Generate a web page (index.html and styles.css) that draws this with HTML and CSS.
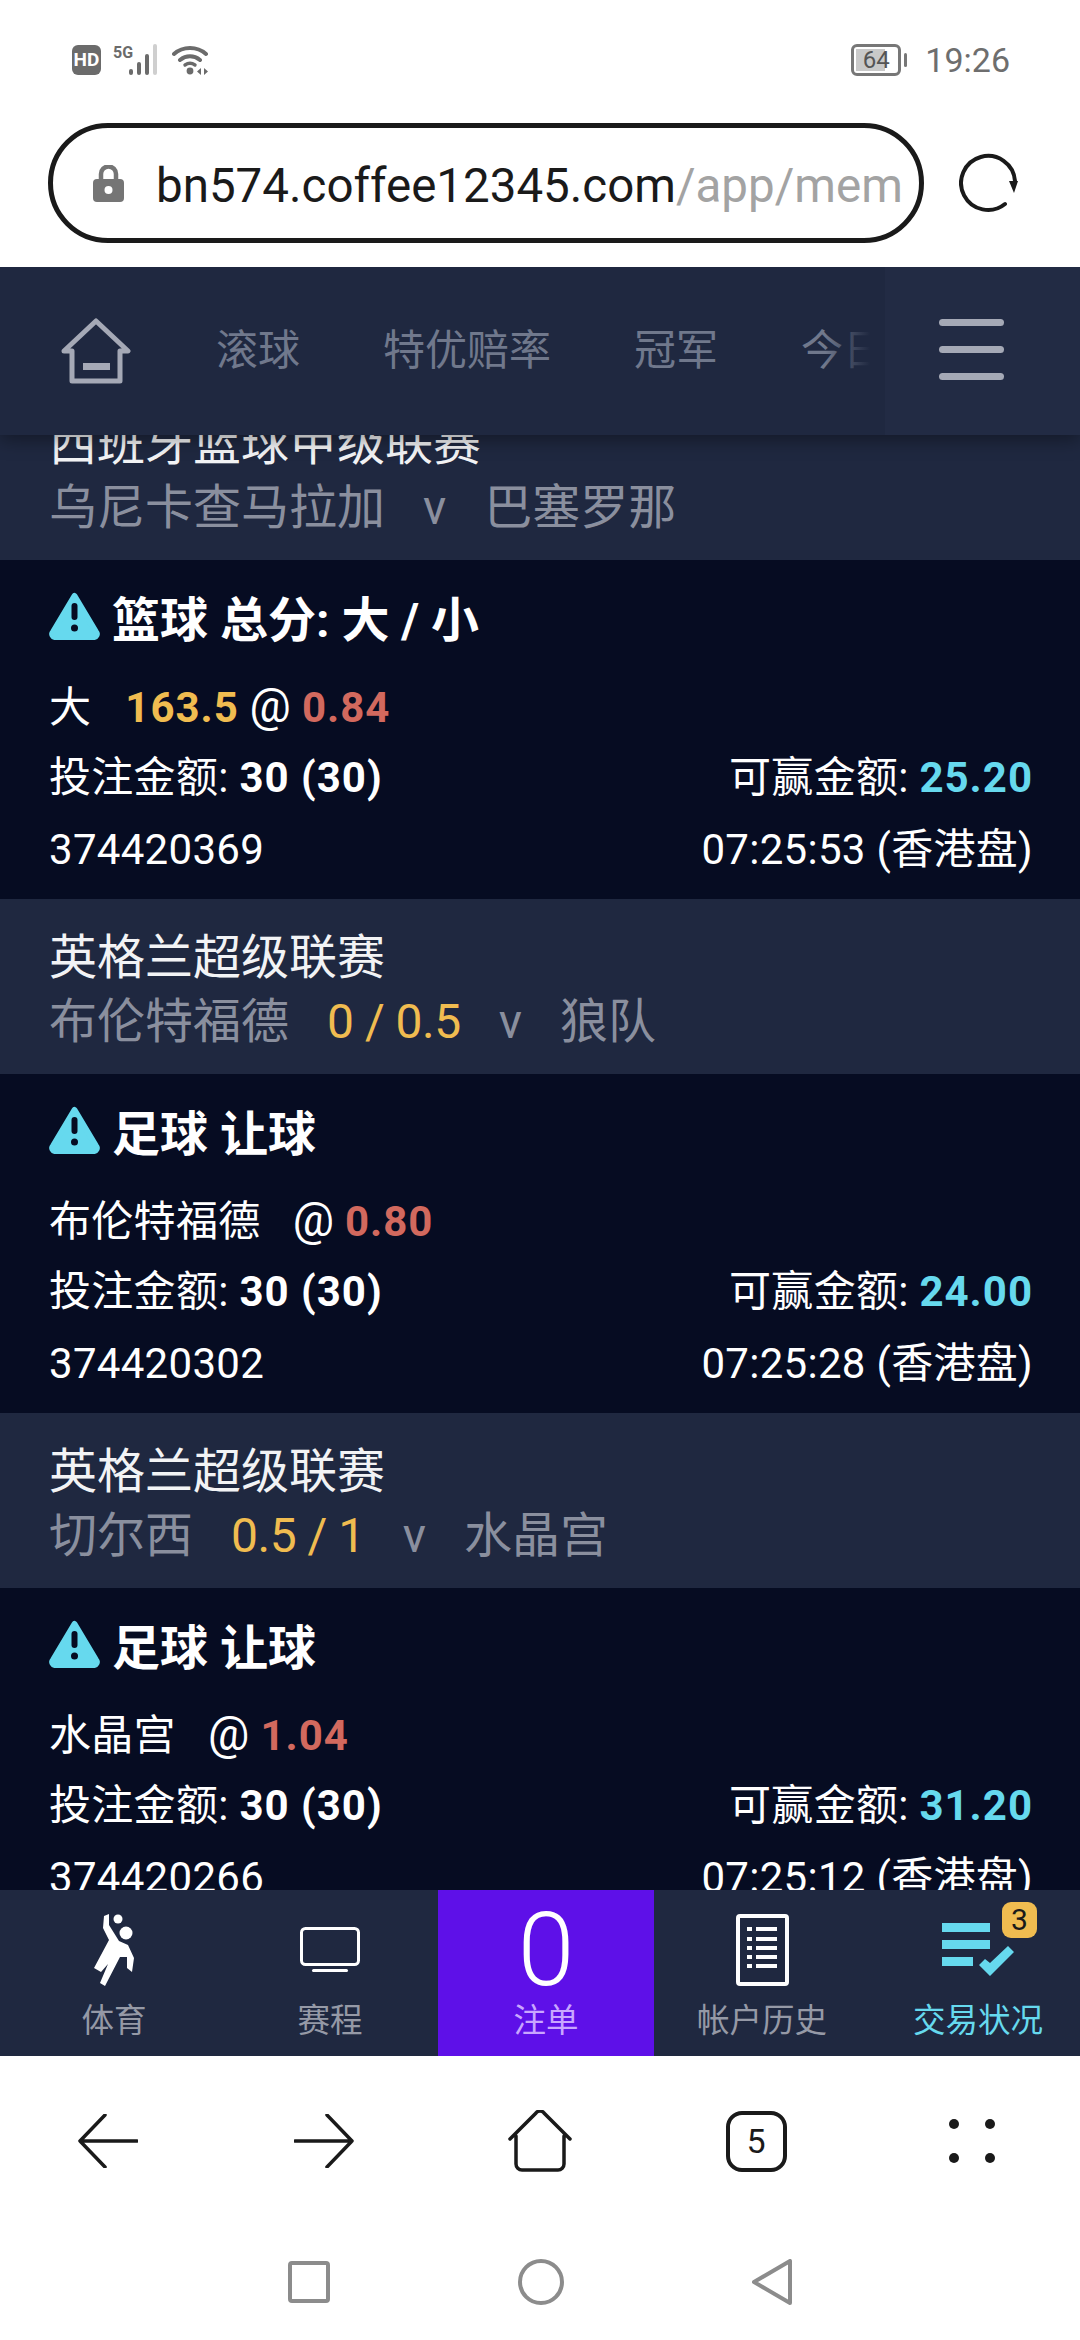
FILE: index.html
```html
<!DOCTYPE html>
<html lang="zh-CN">
<head>
  <meta charset="UTF-8" />
  <title>交易状况</title>
  <link rel="stylesheet" href="styles.css">
</head>
<body>
  <div class="phone">
    <div class="status-bar">
      <div class="status-left">
        <svg class="ic-hd" width="29" height="30" viewBox="0 0 29 30"><rect width="29" height="30" rx="6" fill="#6b6b6b"/><text x="14.5" y="21" class="hd-text">HD</text></svg>
        <svg class="ic-signal" width="50" height="32" viewBox="0 0 50 32"><text x="0" y="14" class="fiveg-text">5G</text><rect x="16" y="25" width="4" height="6" rx="2" fill="#6b6b6b"/><rect x="24" y="18" width="4" height="13" rx="2" fill="#6b6b6b"/><rect x="32" y="10" width="4" height="21" rx="2" fill="#6b6b6b"/><rect x="40" y="0" width="4" height="31" rx="2" fill="#cfcfcf"/></svg>
        <svg class="ic-wifi" width="38" height="32" viewBox="0 0 38 32"><path d="M2 10C11 2 25 2 34 10M8 16C14 11 22 11 28 16" fill="none" stroke="#6b6b6b" stroke-width="4" stroke-linecap="round"/><path d="M13 21c3-2 7-2 10 0" fill="none" stroke="#6b6b6b" stroke-width="3.4" stroke-linecap="round"/><circle cx="18" cy="27" r="3.4" fill="#6b6b6b"/><path d="M29 24v7l-4-3.500zM32 24v7l4-3.500z" fill="#6b6b6b"/></svg>
      </div>
      <div class="status-right">
        <div class="battery"><div class="battery-body"><span class="battery-fill"></span><span class="battery-num">64</span></div><span class="battery-cap"></span></div>
        <span class="clock">19:26</span>
      </div>
    </div>

    <div class="address-row">
      <div class="address-pill">
        <svg width="31" height="37" viewBox="0 0 31 37"><path d="M8 16V9a7.500 7.500 0 0 1 15 0v7" fill="none" stroke="#757575" stroke-width="4.500"/><rect y="14" width="31" height="23" rx="4" fill="#757575"/><circle cx="15.500" cy="25" r="4" fill="#fff"/></svg>
        <div class="url"><span class="url-host">bn574.coffee12345.com</span><span class="url-path">/app/mem</span></div>
      </div>
      <svg class="reload" width="60" height="60" viewBox="0 0 60 60"><path d="M46 51A27 27 0 1 1 56 28" fill="none" stroke="#1a1a1a" stroke-width="4" stroke-linecap="round"/><path d="M50 28H59L55 40Z" fill="#1a1a1a"/></svg>
    </div>

    <div class="top-nav">
      <svg class="nav-home" width="70" height="66" viewBox="0 0 70 66"><path d="M35 3 67 33H59V63H11V33H3Z" fill="none" stroke="#a5a9b6" stroke-width="5" stroke-linejoin="round"/><rect x="22" y="45" width="27" height="7" fill="#a5a9b6"/></svg>
      <div class="nav-scroll">
        <span class="nav-item">滚球</span>
        <span class="nav-item">特优赔率</span>
        <span class="nav-item">冠军</span>
        <span class="nav-item">今日</span>
      </div>
      <div class="nav-menu">
        <span class="menu-line"></span>
        <span class="menu-line"></span>
        <span class="menu-line"></span>
      </div>
    </div>

    <div class="bet-list">
      <div class="bet-list-inner">
        <div class="league">
          <div class="league-name">西班牙篮球甲级联赛</div>
          <div class="league-match"><span>乌尼卡查马拉加</span><span>v</span><span>巴塞罗那</span></div>
        </div>
        <div class="bet">
          <div class="bet-title">
            <svg class="warn" width="51" height="48" viewBox="0 0 51 48"><path d="M25.500 4 47 40a3 3 0 0 1-2.600 5H6.600A3 3 0 0 1 4 40Z" fill="#66d9ee" stroke="#66d9ee" stroke-width="6" stroke-linejoin="round"/><rect x="22.500" y="11" width="6" height="17" rx="3" fill="#060c22"/><circle cx="25.500" cy="36" r="3.500" fill="#060c22"/></svg>
            <span>篮球 总分: 大 / 小</span>
          </div>
          <div class="bet-line"><span>大<b class="yellow pick">163.5</b> <span class="at">@</span> <b class="red">0.84</b></span></div>
          <div class="bet-line"><span>投注金额: <b>30 (30)</b></span><span>可赢金额: <b class="cyan">25.20</b></span></div>
          <div class="bet-line"><span>374420369</span><span>07:25:53 (香港盘)</span></div>
        </div>
        <div class="league">
          <div class="league-name">英格兰超级联赛</div>
          <div class="league-match"><span>布伦特福德</span><span class="yellow line-value">0 / 0.5</span><span>v</span><span>狼队</span></div>
        </div>
        <div class="bet">
          <div class="bet-title">
            <svg class="warn" width="51" height="48" viewBox="0 0 51 48"><path d="M25.500 4 47 40a3 3 0 0 1-2.600 5H6.600A3 3 0 0 1 4 40Z" fill="#66d9ee" stroke="#66d9ee" stroke-width="6" stroke-linejoin="round"/><rect x="22.500" y="11" width="6" height="17" rx="3" fill="#060c22"/><circle cx="25.500" cy="36" r="3.500" fill="#060c22"/></svg>
            <span>足球 让球</span>
          </div>
          <div class="bet-line"><span>布伦特福德&nbsp;&nbsp; <span class="at">@</span> <b class="red">0.80</b></span></div>
          <div class="bet-line"><span>投注金额: <b>30 (30)</b></span><span>可赢金额: <b class="cyan">24.00</b></span></div>
          <div class="bet-line"><span>374420302</span><span>07:25:28 (香港盘)</span></div>
        </div>
        <div class="league">
          <div class="league-name">英格兰超级联赛</div>
          <div class="league-match"><span>切尔西</span><span class="yellow line-value">0.5 / 1</span><span>v</span><span>水晶宫</span></div>
        </div>
        <div class="bet">
          <div class="bet-title">
            <svg class="warn" width="51" height="48" viewBox="0 0 51 48"><path d="M25.500 4 47 40a3 3 0 0 1-2.600 5H6.600A3 3 0 0 1 4 40Z" fill="#66d9ee" stroke="#66d9ee" stroke-width="6" stroke-linejoin="round"/><rect x="22.500" y="11" width="6" height="17" rx="3" fill="#060c22"/><circle cx="25.500" cy="36" r="3.500" fill="#060c22"/></svg>
            <span>足球 让球</span>
          </div>
          <div class="bet-line"><span>水晶宫&nbsp;&nbsp; <span class="at">@</span> <b class="red">1.04</b></span></div>
          <div class="bet-line"><span>投注金额: <b>30 (30)</b></span><span>可赢金额: <b class="cyan">31.20</b></span></div>
          <div class="bet-line"><span>374420266</span><span>07:25:12 (香港盘)</span></div>
        </div>
      </div>
    </div>

    <div class="tabbar">
      <div class="tab">
        <div class="tab-icon"><svg width="50" height="80" viewBox="0 0 50 80"><circle cx="29" cy="9" r="4.500" fill="#fff"/><circle cx="37" cy="23" r="6.500" fill="#fff"/><path d="M15 6 20 4 20 15 30 31 39 35 45 48 43 62 38 58 38 47 31 47 16 76 11 73 19 54 12 62 5 58 20 30 14 18Z" fill="#fff"/></svg></div>
        <div class="tab-label">体育</div>
      </div>
      <div class="tab">
        <div class="tab-icon"><svg width="60" height="46" viewBox="0 0 60 46"><rect x="1.500" y="1.500" width="57" height="36" rx="4" fill="none" stroke="#fff" stroke-width="3"/><rect x="12" y="42" width="36" height="3" rx="1.500" fill="#fff"/></svg></div>
        <div class="tab-label">赛程</div>
      </div>
      <div class="tab tab-slip">
        <div class="tab-icon slip-count">0</div>
        <div class="tab-label">注单</div>
      </div>
      <div class="tab">
        <div class="tab-icon"><svg width="53" height="72" viewBox="0 0 53 72"><rect x="2" y="2" width="49" height="68" rx="2" fill="none" stroke="#fff" stroke-width="4"/><path d="M11 15h5M20 15h21M11 25h5M20 25h21M11 34h5M20 34h21M11 43h5M20 43h21M11 52h5M20 52h21" stroke="#fff" stroke-width="4"/></svg></div>
        <div class="tab-label">帐户历史</div>
      </div>
      <div class="tab tab-active">
        <div class="tab-icon"><svg width="72" height="54" viewBox="0 0 72 54"><path d="M0 0H48V9H0ZM0 17H48V26H0ZM0 34H31V43H0Z" fill="#66d9ee"/><path d="M37 42 48 53 72 29 66 23 48 40 43 36Z" fill="#66d9ee"/></svg></div>
        <div class="tab-label">交易状况</div>
        <span class="tab-badge">3</span>
      </div>
    </div>

    <div class="browser-bar">
      <div class="browser-tools">
        <svg width="60" height="54" viewBox="0 0 60 54"><path d="M27 1 2 27 27 53M2 27H59" fill="none" stroke="#1a1a1a" stroke-width="3.500" stroke-linecap="round" stroke-linejoin="round"/></svg>
        <svg width="60" height="54" viewBox="0 0 60 54"><path d="M33 1 58 27 33 53M58 27H1" fill="none" stroke="#1a1a1a" stroke-width="3.500" stroke-linecap="round" stroke-linejoin="round"/></svg>
        <svg width="64" height="62" viewBox="0 0 64 62"><path d="M2 29 28 3a5 5 0 0 1 8 0L62 29M8 26V54a6 6 0 0 0 6 6H50a6 6 0 0 0 6-6V26" fill="none" stroke="#1a1a1a" stroke-width="3.500" stroke-linecap="round"/></svg>
        <div class="tab-count">5</div>
        <div class="dots"><i></i><i></i><i></i><i></i></div>
      </div>
      <div class="system-nav">
        <svg width="42" height="42" viewBox="0 0 42 42"><rect x="2" y="2" width="38" height="38" rx="2" fill="none" stroke="#8c8c8c" stroke-width="4"/></svg>
        <svg width="46" height="46" viewBox="0 0 46 46"><circle cx="23" cy="23" r="21" fill="none" stroke="#8c8c8c" stroke-width="4"/></svg>
        <svg width="40" height="46" viewBox="0 0 40 46"><path d="M38 2V44L2 23Z" fill="none" stroke="#8c8c8c" stroke-width="4" stroke-linejoin="round"/></svg>
      </div>
    </div>
  </div>
</body>
</html>
```

FILE: styles.css
```css
:root {
  --panel: #1f2840;
  --card: #060c22;
  --muted: #8a8f9e;
  --yellow: #f0bc50;
  --red: #d2695e;
  --cyan: #66d9ee;
  --purple: #5e10e8;
}

* {
  box-sizing: border-box;
}

body {
  margin: 0;
  background: #fff;
  font-family: Roboto, "Noto Sans CJK SC", sans-serif;
}

.phone {
  width: 1080px;
  height: 2340px;
  display: flex;
  flex-direction: column;
  overflow: hidden;
}

/* status bar */
.status-bar {
  height: 123px;
  flex: none;
  padding: 0 70px 4px 72px;
  display: flex;
  align-items: center;
  justify-content: space-between;
}

.status-left {
  display: flex;
  align-items: center;
}

.ic-hd {
  margin-right: 12px;
}

.ic-signal {
  margin-right: 9px;
}

.hd-text {
  font-size: 19px;
  font-weight: 700;
  fill: #fff;
  text-anchor: middle;
}

.fiveg-text {
  font-size: 16px;
  font-weight: 700;
  fill: #6b6b6b;
}

.status-right {
  display: flex;
  align-items: center;
  gap: 18px;
}

.battery {
  display: flex;
  align-items: center;
  gap: 3px;
}

.battery-body {
  position: relative;
  width: 50px;
  height: 32px;
  border: 3px solid #777;
  border-radius: 6px;
}

.battery-fill {
  position: absolute;
  left: 2px;
  top: 2px;
  bottom: 2px;
  width: 29px;
  background: #c9c9c9;
}

.battery-num {
  position: absolute;
  left: 0;
  right: 0;
  top: 0;
  line-height: 26px;
  text-align: center;
  font-size: 24px;
  color: #555;
}

.battery-cap {
  width: 3px;
  height: 14px;
  border-radius: 2px;
  background: #777;
}

.clock {
  font-size: 34px;
  color: #6e6e6e;
}

/* address bar */
.address-row {
  position: relative;
  z-index: 3;
  height: 144px;
  flex: none;
  padding: 0 61px 24px 48px;
  display: flex;
  align-items: center;
  justify-content: space-between;
  background: #fff;
}

.address-pill {
  width: 876px;
  height: 120px;
  border: 5px solid #1a1a1a;
  border-radius: 60px;
  padding: 0 18px 0 40px;
  display: flex;
  align-items: center;
  gap: 32px;
}

.address-pill svg {
  flex: none;
}

.url {
  flex: 1;
  overflow: hidden;
  white-space: nowrap;
  padding-top: 6px;
  font-size: 47.5px;
  line-height: 60px;
}

.url-host {
  color: #1a1a1a;
}

.url-path {
  color: #a3a3a3;
}

/* top nav */
.top-nav {
  position: relative;
  z-index: 2;
  height: 168px;
  flex: none;
  display: flex;
  align-items: center;
  background: var(--panel);
  box-shadow: 0 4px 18px rgba(0, 0, 0, 0.4);
}

.nav-home {
  flex: none;
  margin: 0 85px 0 61px;
}

.nav-scroll {
  position: relative;
  width: 669px;
  flex: none;
  display: flex;
  gap: 83px;
  overflow: hidden;
  white-space: nowrap;
}

.nav-scroll::after {
  content: "";
  position: absolute;
  top: 0;
  right: 0;
  bottom: 0;
  width: 60px;
  background: linear-gradient(to right, rgba(31, 40, 64, 0), var(--panel) 75%);
}

.nav-item {
  font-size: 42px;
  line-height: 56px;
  color: #70788c;
}

.nav-menu {
  align-self: stretch;
  flex: 1;
  display: flex;
  flex-direction: column;
  justify-content: center;
  align-items: flex-end;
  gap: 20px;
  padding-right: 76px;
  padding-bottom: 4px;
  background: #222b44;
}

.menu-line {
  width: 65px;
  height: 7px;
  border-radius: 4px;
  background: #a5a9b6;
}

/* bets */
.bet-list {
  flex: 1;
  min-height: 0;
  overflow: hidden;
  background: var(--card);
}

.bet-list-inner {
  margin-top: -50px;
}

.league {
  height: 175px;
  padding: 27px 49px 0;
  background: var(--panel);
}

.league-name {
  font-size: 48px;
  line-height: 63px;
  color: #f2f3f5;
}

.league-match {
  display: flex;
  gap: 38px;
  font-size: 48px;
  line-height: 66px;
  color: var(--muted);
}

.line-value {
  letter-spacing: -0.5px;
}

.bet {
  height: 339px;
  padding: 30px 47px 0 49px;
  background: var(--card);
  color: #fff;
}

.bet-title {
  display: flex;
  align-items: center;
  gap: 12px;
  height: 52px;
  margin-bottom: 28px;
  font-size: 48px;
  font-weight: 700;
}

.warn {
  flex: none;
}

.bet-line {
  display: flex;
  justify-content: space-between;
  height: 72px;
  font-size: 42px;
  line-height: 72px;
  letter-spacing: 0.3px;
  white-space: nowrap;
}

.bet-line b {
  font-weight: 700;
  letter-spacing: 1px;
}

.pick {
  margin-left: 34px;
}

.at {
  font-size: 46px;
}

.yellow {
  color: var(--yellow);
}

.red {
  color: var(--red);
}

.cyan {
  color: var(--cyan);
}

/* tab bar */
.tabbar {
  height: 166px;
  flex: none;
  padding-left: 6px;
  display: grid;
  grid-template-columns: repeat(5, 216px);
  overflow: hidden;
  background: var(--panel);
}

.tab {
  position: relative;
  display: flex;
  flex-direction: column;
  align-items: center;
  padding-top: 22px;
}

.tab-icon {
  height: 76px;
  margin-bottom: 13px;
  display: flex;
  align-items: center;
  justify-content: center;
}

.tab-label {
  font-size: 32.5px;
  line-height: 40px;
  color: #9599a6;
}

.tab-slip {
  background: var(--purple);
}

.tab-slip .tab-label {
  color: #c9a6ff;
}

.slip-count {
  font-size: 102px;
  font-weight: 300;
  color: #fff;
}

.tab-active .tab-label {
  color: var(--cyan);
}

.tab-badge {
  position: absolute;
  top: 12px;
  right: 49px;
  width: 35px;
  height: 36px;
  border-radius: 9px;
  background: var(--yellow);
  color: #1a1a1a;
  font-size: 30px;
  line-height: 36px;
  text-align: center;
}

/* browser toolbar and system nav */
.browser-bar {
  height: 284px;
  flex: none;
  background: #fff;
}

.browser-tools {
  height: 62px;
  margin-top: 54px;
  display: grid;
  grid-template-columns: repeat(5, 216px);
  justify-items: center;
  align-items: center;
}

.tab-count {
  width: 61px;
  height: 61px;
  border: 4px solid #1a1a1a;
  border-radius: 16px;
  font-size: 34px;
  line-height: 53px;
  text-align: center;
  color: #1a1a1a;
}

.dots {
  width: 46px;
  display: grid;
  grid-template-columns: 10px 10px;
  justify-content: space-between;
  row-gap: 24px;
}

.dots i {
  width: 10px;
  height: 10px;
  border-radius: 50%;
  background: #1a1a1a;
}

.system-nav {
  height: 46px;
  margin: 87px 288px 0;
  display: flex;
  justify-content: space-between;
  align-items: center;
}
```
